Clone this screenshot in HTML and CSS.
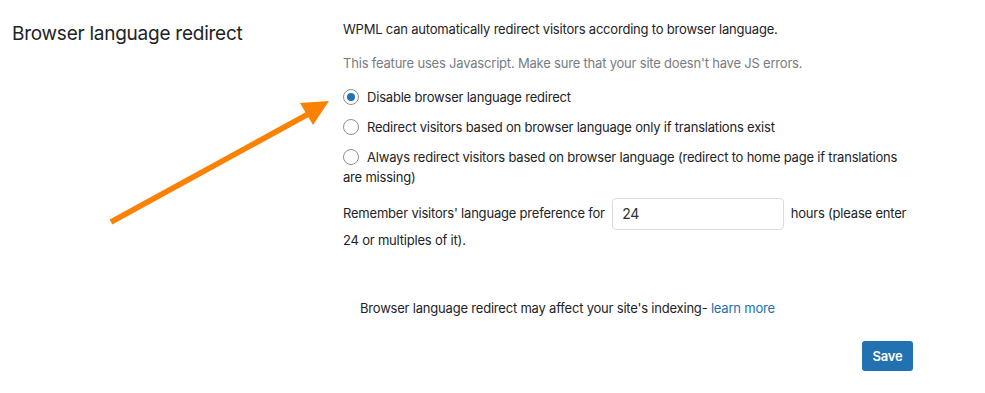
FILE: index.html
```html
<!DOCTYPE html>
<html>
<head>
<meta charset="utf-8">
<link rel="stylesheet" href="styles.css">
</head>
<body>
<div class="page">
  <div class="label-col">
    <h2 class="title">Browser language redirect</h2>
  </div>
  <div class="content-col">
    <p class="intro">WPML can automatically redirect visitors according to browser language.</p>
    <p class="note">This feature uses Javascript. Make sure that your site doesn't have JS errors.</p>
    <ul class="options">
      <li><label><span class="radio checked"></span>Disable browser language redirect</label></li>
      <li><label><span class="radio"></span>Redirect visitors based on browser language only if translations exist</label></li>
      <li><label><span class="radio"></span>Always redirect visitors based on browser language (redirect to home page if translations are missing)</label></li>
    </ul>
    <p class="remember">Remember visitors' language preference for <span class="field">24</span> hours (please enter 24 or multiples of it).</p>
    <p class="warning">Browser language redirect may affect your site's indexing- <a href="#" class="link">learn more</a></p>
    <div class="actions"><button class="save">Save</button></div>
  </div>
</div>
<svg class="arrow" width="985" height="393" viewBox="0 0 985 393">
  <line x1="111" y1="222" x2="312" y2="112" stroke="#fb8102" stroke-width="5.5"/>
  <polygon points="300,103 329,101 313,125" fill="#fb8102"/>
</svg>
</body>
</html>
```
FILE: styles.css
```css
html, body {
  margin: 0;
  padding: 0;
  background: #ffffff;
}
body {
  font-family: Inter, "Liberation Sans", Arial, sans-serif;
  font-size: 13px;
  letter-spacing: -0.2px;
  color: #1d2327;
  width: 985px;
  height: 393px;
  position: relative;
  overflow: hidden;
}
.page {
  display: flex;
}
.label-col {
  width: 343px;
  flex: none;
}
.title {
  margin: 22px 0 0 12px;
  font-size: 19px;
  font-weight: 400;
  line-height: 24px;
  letter-spacing: -0.25px;
  color: #1d2327;
}
.content-col {
  width: 570px;
  flex: none;
  padding-top: 19px;
}
p {
  margin: 0;
  line-height: 20px;
}
.note {
  margin-top: 14px;
  color: #787c82;
}
.options {
  list-style: none;
  margin: 15px 0 0;
  padding: 0;
}
.options li {
  line-height: 19.5px;
  margin-bottom: 10.5px;
}
.options li:last-child {
  margin-bottom: 0;
}
.radio {
  display: inline-block;
  width: 14px;
  height: 14px;
  border: 1px solid #8c8f94;
  border-radius: 50%;
  vertical-align: -3px;
  margin-right: 8px;
  position: relative;
  box-sizing: content-box;
  background: #fff;
}
.radio.checked::after {
  content: "";
  position: absolute;
  left: 3px;
  top: 3px;
  width: 8px;
  height: 8px;
  border-radius: 50%;
  background: #2271b1;
}
.remember {
  margin-top: 11px;
  line-height: 20px;
}
.field {
  display: inline-block;
  box-sizing: border-box;
  width: 172px;
  height: 32px;
  line-height: 30px;
  border: 1px solid #dcdcde;
  border-radius: 4px;
  padding: 0 9px;
  margin: 0 3px 0 4px;
  vertical-align: middle;
  color: #2c3338;
  font-size: 14px;
}
.warning {
  margin-top: 48px;
  padding-left: 17px;
}
.link {
  color: #2271b1;
  text-decoration: none;
}
.actions {
  display: flex;
  justify-content: flex-end;
  margin-top: 23px;
}
.save {
  width: 51px;
  height: 30px;
  border: none;
  border-radius: 3px;
  background: #2271b1;
  color: #fff;
  font-family: inherit;
  font-size: 13px;
  font-weight: 600;
  letter-spacing: -0.2px;
  padding: 0;
}
.arrow {
  position: absolute;
  left: 0;
  top: 0;
  pointer-events: none;
}
```
